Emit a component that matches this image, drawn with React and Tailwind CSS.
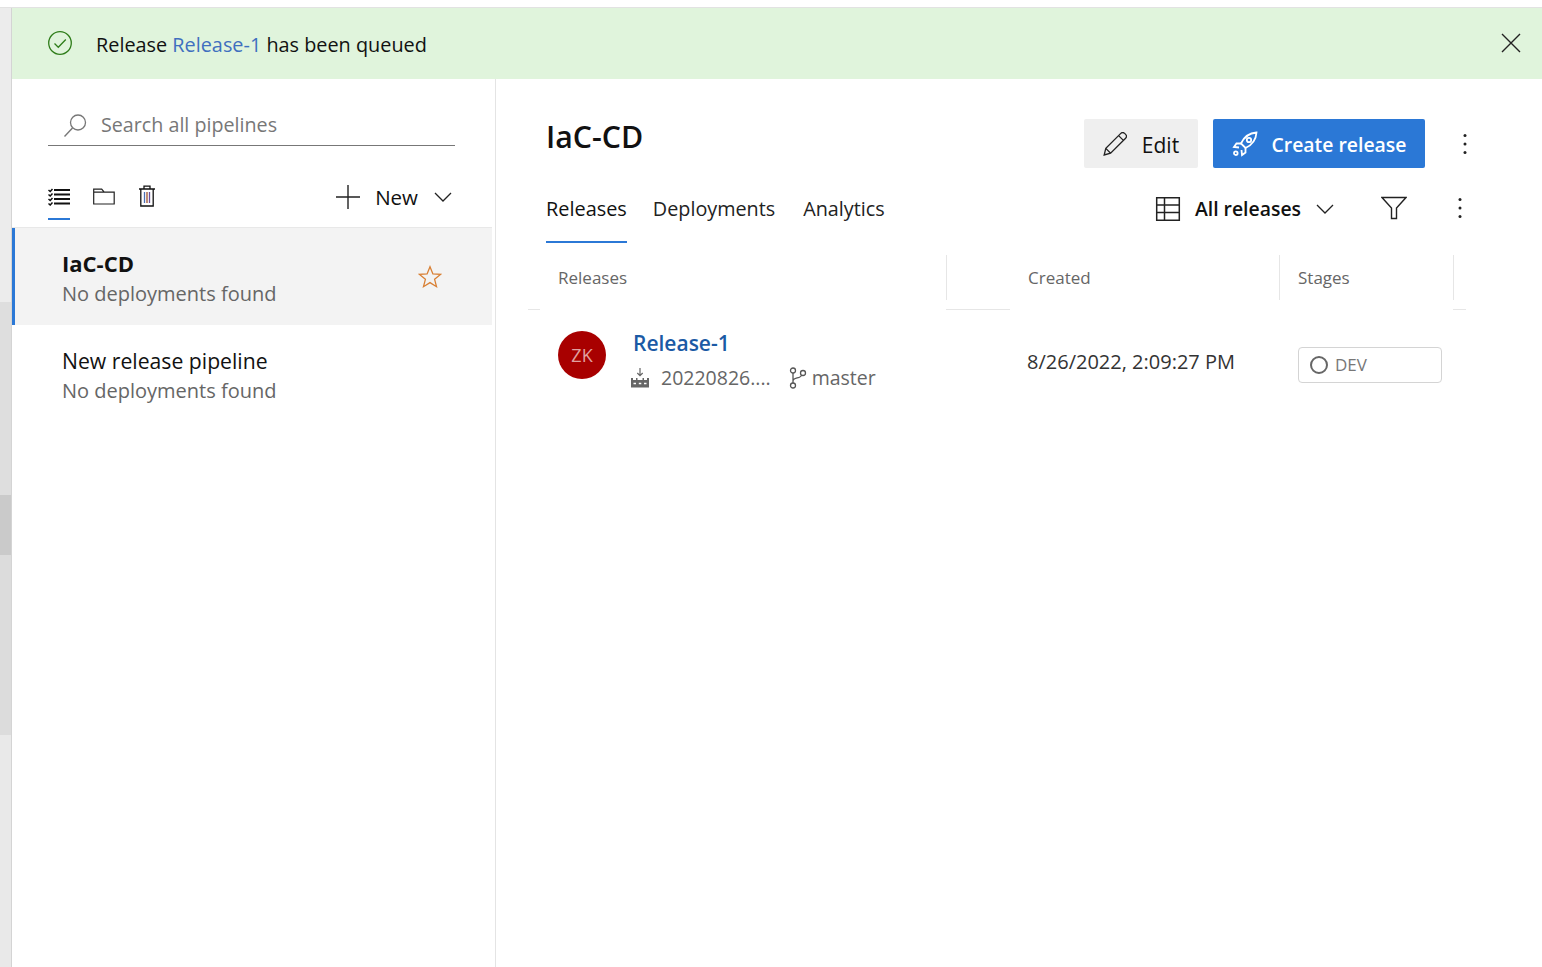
const font = { fontFamily: '"Open Sans", "Noto Sans", sans-serif' };

function CheckCircleIcon() {
  return (
    <svg width="26" height="26" viewBox="0 0 26 26" fill="none">
      <circle cx="13" cy="13" r="11.3" stroke="#2f7d1a" strokeWidth="1.3" />
      <path d="M7.5 13.5l3.8 3.8 7.5-7.8" stroke="#2f7d1a" strokeWidth="1.3" />
    </svg>
  );
}

function CloseIcon() {
  return (
    <svg width="20" height="20" viewBox="0 0 20 20" fill="none">
      <path d="M1 1l18 18M19 1L1 19" stroke="#222" strokeWidth="1.4" />
    </svg>
  );
}

function SearchIcon() {
  return (
    <svg width="26" height="26" viewBox="0 0 26 26" fill="none">
      <circle cx="16" cy="9.5" r="7.5" stroke="#777" strokeWidth="1.3" />
      <path d="M10.5 15L2.5 23.5" stroke="#777" strokeWidth="1.4" />
    </svg>
  );
}

function ListIcon() {
  return (
    <svg width="22" height="18" viewBox="0 0 22 18" fill="none">
      <path d="M6 2h16M6 6.5h16M6 11h16M6 15.5h16" stroke="#111" strokeWidth="2" />
      <path d="M.5 2l1.7 1.5L4.5 1M.5 6.5L2.2 8l2.3-2.5M.5 11l1.7 1.5L4.5 10M.5 15.5L2.2 17l2.3-2.5" stroke="#111" strokeWidth="1.5" />
    </svg>
  );
}

function FolderIcon() {
  return (
    <svg width="22" height="17" viewBox="0 0 22 17" fill="none">
      <path d="M.7 16V1.2h8l2.5 3h10V16z M.7 4.2h10.5" stroke="#222" strokeWidth="1.2" />
    </svg>
  );
}

function TrashIcon() {
  return (
    <svg width="18" height="22" viewBox="0 0 18 22" fill="none">
      <path d="M1 4h16M6 4V1.2h6V4M2.8 4v17h12.4V4" stroke="#111" strokeWidth="1.3" />
      <path d="M6.5 7v11" stroke="#4a6fb5" strokeWidth="1.3" />
      <path d="M9 7v11" stroke="#a0522d" strokeWidth="1.3" />
      <path d="M11.5 7v11" stroke="#6a4fa0" strokeWidth="1.3" />
    </svg>
  );
}

function PlusIcon() {
  return (
    <svg width="24" height="24" viewBox="0 0 24 24" fill="none">
      <path d="M0 12h24M12 0v24" stroke="#222" strokeWidth="1.4" />
    </svg>
  );
}

function ChevronIcon() {
  return (
    <svg width="18" height="10" viewBox="0 0 18 10" fill="none">
      <path d="M1 1l8 8 8-8" stroke="#222" strokeWidth="1.3" />
    </svg>
  );
}

function StarIcon() {
  return (
    <svg width="24" height="24" viewBox="0 0 24 24" fill="none">
      <path d="M12 1.8l2.9 7.1 7.6.5-5.9 4.9 1.9 7.4L12 17.6l-6.5 4.1 1.9-7.4-5.9-4.9 7.6-.5z" stroke="#d87f33" strokeWidth="1.3" />
    </svg>
  );
}

function PencilIcon() {
  return (
    <svg width="24" height="24" viewBox="0 0 24 24" fill="none">
      <path d="M1.2 23l1.6-6.6L17.8 1.4a2.7 2.7 0 0 1 3.8 0l1 1a2.7 2.7 0 0 1 0 3.8L7.6 21.2zM2.8 16.4l4.8 4.8M15.6 3.6l4.8 4.8" stroke="#222" strokeWidth="1.3" />
    </svg>
  );
}

function RocketIcon() {
  return (
    <svg width="26" height="26" viewBox="0 0 26 26" fill="none" stroke="#fff" strokeWidth="1.8">
      <path d="M9 12.5C12 6 17 2 24.5 1.5 24 9 20 14 13.5 17z" />
      <circle cx="17" cy="9" r="2.2" />
      <path d="M9 12.5H4.5L2 16l5 .5M13.5 17v4.500L10 24l-.5-5" />
      <circle cx="3.8" cy="22.2" r="1.8" />
    </svg>
  );
}

function KebabIcon() {
  return (
    <svg width="4" height="22" viewBox="0 0 4 22" fill="#222">
      <circle cx="2" cy="2.5" r="1.5" />
      <circle cx="2" cy="11" r="1.5" />
      <circle cx="2" cy="19.5" r="1.5" />
    </svg>
  );
}

function TableIcon() {
  return (
    <svg width="26" height="26" viewBox="0 0 26 26" fill="none">
      <path d="M1.7 1.7h22.6v22.6H1.7zM1.7 9h22.6M1.7 16.5h22.6M9.5 1.7v22.6" stroke="#222" strokeWidth="1.5" />
    </svg>
  );
}

function FilterIcon() {
  return (
    <svg width="26" height="24" viewBox="0 0 26 24" fill="none">
      <path d="M1 1.5h24L15.500 12v10.500h-5V12z" stroke="#222" strokeWidth="1.4" />
    </svg>
  );
}

function BuildIcon() {
  return (
    <svg width="20" height="20" viewBox="0 0 20 20" fill="none">
      <path d="M10 0v7.5M7.3 5L10 7.700 12.700 5" stroke="#666" strokeWidth="1.2" />
      <path d="M1 19.5V10h2v2h3v-2h1.500v2h5v-2H14v2h3v-2h2v9.500z" fill="#666" />
      <path d="M3.500 15.500h2.500M8.800 15.500h2.500M14 15.500h2.500" stroke="#fff" strokeWidth="1.7" />
    </svg>
  );
}

function BranchIcon() {
  return (
    <svg width="18" height="22" viewBox="0 0 18 22" fill="none">
      <circle cx="4" cy="3.5" r="2.5" stroke="#555" strokeWidth="1.3" />
      <circle cx="4" cy="18.5" r="2.5" stroke="#555" strokeWidth="1.3" />
      <circle cx="14" cy="6" r="2.5" stroke="#555" strokeWidth="1.3" />
      <path d="M4 6v10M4 14c0-4 8-2 8.500-6" stroke="#555" strokeWidth="1.3" />
    </svg>
  );
}

function PipelineRow({ name, selected }) {
  return (
    <div
      className={`flex items-center h-[97px] w-[480px] pl-[50px] pr-[50px] ${
        selected ? "bg-[#f3f3f3] shadow-[inset_3px_0_0_#2b78d6]" : ""
      }`}
    >
      <div className={`flex-1 ${selected ? "mt-[3px]" : "mt-[5px]"}`}>
        <div className={`text-[#111] ${selected ? "text-[22px] leading-[32px] font-bold" : "text-[21.2px] leading-[30px]"}`}>
          {name}
        </div>
        <div className="text-[20px] leading-[30px] text-[#666]">No deployments found</div>
      </div>
      {selected && <StarIcon />}
    </div>
  );
}

export default function App() {
  return (
    <div className="flex flex-col w-[1542px] h-[967px] overflow-hidden bg-white" style={font}>
      <div className="h-[8px] shrink-0 bg-white border-b border-[#e2e2e2]" />
      <div className="flex flex-1 min-h-0">
        {/* scrollbar strip of the page behind */}
        <div className="w-[12px] shrink-0 flex flex-col border-r border-[#d4d4d4]">
          <div className="h-[294px] bg-[#ececec]" />
          <div className="h-[193px] bg-[#dedede]" />
          <div className="h-[60px] bg-[#cacaca]" />
          <div className="h-[180px] bg-[#dcdcdc]" />
          <div className="flex-1 bg-[#e9e9e9]" />
        </div>

        <div className="flex-1 flex flex-col min-w-0">
          <div className="h-[71px] shrink-0 bg-[#e0f4dc] flex items-center pl-[35px] pr-[21px]">
            <div className="-mt-[2px]"><CheckCircleIcon /></div>
            <div className="ml-[23px] flex-1 text-[19.85px] text-[#111] mt-[2px]">
              Release <span className="text-[#3f6fbf]">Release-1</span> has been queued
            </div>
            <div className="-mt-[2px]"><CloseIcon /></div>
          </div>

          <div className="flex flex-1 min-h-0">
            {/* left pane */}
            <div className="w-[484px] shrink-0 border-r border-[#e4e4e4] flex flex-col">
              <div className="mt-[28px] ml-[36px] w-[407px] h-[39px] border-b border-[#777] flex items-center pl-[14px]">
                <SearchIcon />
                <span className="ml-[13px] text-[19.7px] text-[#777] -mt-[2px]">Search all pipelines</span>
              </div>

              <div className="mt-[39px] ml-[36px] w-[408px] h-[42px] flex items-start">
                <div className="w-[22px] h-[35px] border-b-[2px] border-[#2b78d6] pt-[3px]">
                  <ListIcon />
                </div>
                <div className="ml-[23px] pt-[3px]"><FolderIcon /></div>
                <div className="ml-[23px]"><TrashIcon /></div>
                <div className="ml-auto flex items-center pr-[4px] -mt-[3px]">
                  <PlusIcon />
                  <span className="ml-[15px] text-[20.5px] text-[#111]">New</span>
                  <span className="ml-[16px]"><ChevronIcon /></span>
                </div>
              </div>

              <div className="w-[480px] border-t border-[#e8e8e8]">
                <PipelineRow name="IaC-CD" selected />
                <PipelineRow name="New release pipeline" />
              </div>
            </div>

            {/* right pane */}
            <div className="flex-1 min-w-0 flex flex-col pl-[32px]">
              <div className="pl-[18px] pr-[75px] pt-[40px] h-[89px] flex items-start shrink-0">
                <h1 className="text-[30.3px] font-semibold leading-[36px] text-[#111]">IaC-CD</h1>
                <button className="ml-auto w-[114px] h-[49px] rounded-[2px] bg-[#efefef] flex items-center justify-center gap-[15px] text-[21px] text-[#111]">
                  <PencilIcon />
                  <span className="mt-[4px]">Edit</span>
                </button>
                <button className="ml-[15px] w-[212px] h-[49px] rounded-[2px] bg-[#2b78d6] flex items-center justify-center gap-[14px] text-[19.4px] font-semibold text-white">
                  <RocketIcon />
                  <span className="mt-[2px]">Create release</span>
                </button>
                <div className="ml-[38px] mt-[14px]"><KebabIcon /></div>
              </div>

              <div className="pl-[18px] pr-[80px] h-[75px] shrink-0 flex">
                <div className="flex items-start h-[75px]">
                  <div className="h-[75px] pt-[24px] border-b-[2px] border-[#2b78d6] text-[19.9px] leading-[33px] text-[#111]">
                    Releases
                  </div>
                  <div className="ml-[26px] pt-[24px] text-[19.8px] leading-[33px] text-[#222]">Deployments</div>
                  <div className="ml-[28px] pt-[24px] text-[19.8px] leading-[33px] text-[#222]">Analytics</div>
                </div>
                <div className="ml-auto flex items-start pt-[28px]">
                  <TableIcon />
                  <span className="ml-[14px] text-[19.4px] leading-[26px] font-semibold text-[#111]">All releases</span>
                  <span className="ml-[15px] mt-[8px]"><ChevronIcon /></span>
                  <span className="ml-[47px]"><FilterIcon /></span>
                  <span className="ml-[51px] mt-[1px]"><KebabIcon /></span>
                </div>
              </div>

              {/* table header */}
              <div className="mt-[12px] flex h-[45px] shrink-0 w-[926px] text-[17px] text-[#666]">
                <div className="w-[419px] pl-[30px] border-r border-[#e6e6e6] flex items-center">Releases</div>
                <div className="w-[333px] pl-[81px] border-r border-[#e6e6e6] flex items-center">Created</div>
                <div className="w-[174px] pl-[18px] border-r border-[#e6e6e6] flex items-center">Stages</div>
              </div>
              <div className="mt-[9px] flex h-px shrink-0 w-[938px]">
                <div className="w-[12px] bg-[#e6e6e6]" />
                <div className="w-[406px]" />
                <div className="w-[64px] bg-[#e6e6e6]" />
                <div className="w-[443px]" />
                <div className="w-[13px] bg-[#e6e6e6]" />
              </div>

              {/* release row */}
              <div className="mt-[21px] flex w-[926px] items-start">
                <div className="ml-[30px] w-[48px] h-[48px] rounded-full bg-[#a80000] flex items-center justify-center text-[18px] text-[#e0a0a0]">
                  ZK
                </div>
                <div className="ml-[27px] w-[394px]">
                  <div className="-mt-[1px] text-[21px] leading-[26px] text-[#1b5aa5] font-semibold">Release-1</div>
                  <div className="mt-[8px] -ml-[3px] flex items-center text-[19.5px] leading-[28px] text-[#666]">
                    <BuildIcon />
                    <span className="ml-[11px]">20220826....</span>
                    <span className="ml-[18px]"><BranchIcon /></span>
                    <span className="ml-[5px]">master</span>
                  </div>
                </div>
                <div className="w-[271px] mt-[16px] text-[20px] leading-[30px] text-[#333]">8/26/2022, 2:09:27 PM</div>
                <div className="mt-[16px] w-[144px] h-[36px] rounded-[4px] border border-[#d4d4d4] flex items-center pl-[11px] text-[17px] text-[#777]">
                  <span className="w-[18px] h-[18px] rounded-full border-[2px] border-[#666]" />
                  <span className="ml-[7px]">DEV</span>
                </div>
              </div>
            </div>
          </div>
        </div>
      </div>
    </div>
  );
}
